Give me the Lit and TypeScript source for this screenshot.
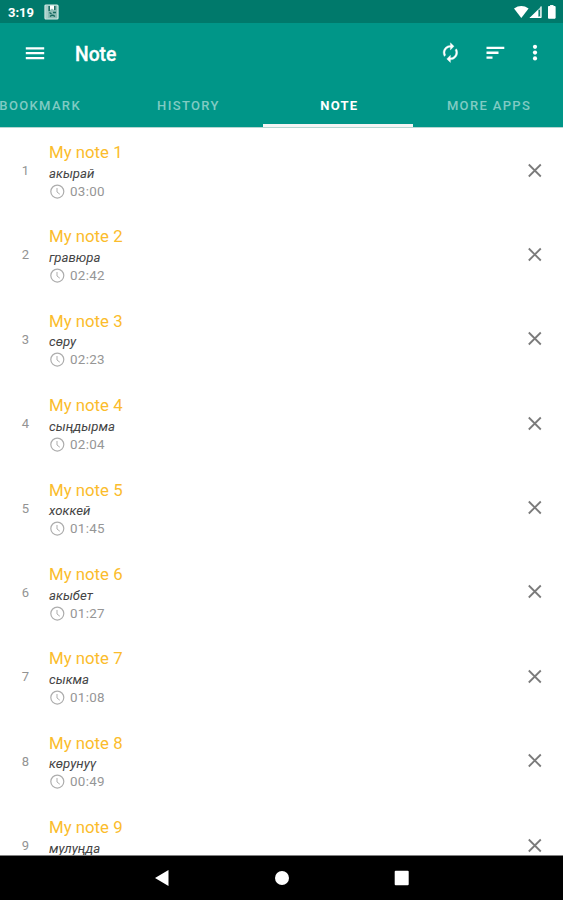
import { LitElement, html, css } from "lit";
import { customElement, property } from "lit/decorators.js";

interface Note {
  word: string;
  time: string;
}

const NOTES: Note[] = [
  { word: "акырай", time: "03:00" },
  { word: "гравюра", time: "02:42" },
  { word: "сөру", time: "02:23" },
  { word: "сыңдырма", time: "02:04" },
  { word: "хоккей", time: "01:45" },
  { word: "акыбет", time: "01:27" },
  { word: "сыкма", time: "01:08" },
  { word: "көрунуү", time: "00:49" },
  { word: "мулуңда", time: "" },
];

const TABS = ["BOOKMARK", "HISTORY", "NOTE", "MORE APPS"];

@customElement("note-row")
export class NoteRow extends LitElement {
  @property({ type: Number }) index = 1;
  @property() word = "";
  @property() time = "";

  static styles = css`
    :host {
      display: grid;
      grid-template-columns: 49px 1fr 57px;
      height: 84.4px;
      box-sizing: border-box;
      padding-top: 14px;
      flex: none;
    }
    .num {
      font-size: 13px;
      line-height: 16px;
      color: #939393;
      width: 51px;
      text-align: center;
      padding-top: 21px;
    }
    .title {
      font-size: 16.8px;
      line-height: 20px;
      color: #fbbc2c;
    }
    .word {
      font-size: 13.2px;
      line-height: 16px;
      font-style: italic;
      color: #444;
      margin-top: 3.6px;
    }
    .time {
      display: flex;
      align-items: center;
      gap: 5px;
      font-size: 13.4px;
      line-height: 16px;
      letter-spacing: 0.3px;
      color: #969696;
      margin-top: 2px;
    }
    .close {
      padding: 19.5px 0 0 20px;
    }
    svg {
      display: block;
    }
  `;

  render() {
    return html`
      <div class="num">${this.index}</div>
      <div>
        <div class="title">My note ${this.index}</div>
        <div class="word">${this.word}</div>
        ${this.time
          ? html`<div class="time">
              <svg width="16" height="16" viewBox="0 0 16 16" fill="none" stroke="#adadad">
                <circle cx="8.300" cy="7.600" r="6.500" stroke-width="1.200" />
                <path d="M8 4v4l2.800 2.200" />
              </svg>
              <span>${this.time}</span>
            </div>`
          : null}
      </div>
      <div class="close">
        <svg width="17" height="17" viewBox="0 0 17 17" fill="none" stroke="#7b7b7b" stroke-width="1.800">
          <path d="M2.800 2.500l12 12M14.800 2.500l-12 12" />
        </svg>
      </div>
    `;
  }
}

@customElement("app-root")
export class AppRoot extends LitElement {
  static styles = css`
    :host {
      display: flex;
      flex-direction: column;
      width: 563px;
      height: 900px;
      overflow: hidden;
      background: #fff;
      font-family: Roboto, "Noto Sans", sans-serif;
    }
    svg {
      display: block;
      flex: none;
    }
    .status {
      display: flex;
      align-items: center;
      height: 23px;
      box-sizing: border-box;
      padding: 1px 5px 0 8px;
      background: #00796b;
      color: #fff;
      font-size: 13px;
      font-weight: 700;
      flex: none;
    }
    .clock {
      width: 36px;
    }
    .spacer {
      flex: 1;
    }
    .header {
      background: #009688;
      height: 104px;
      flex: none;
      color: #fff;
      border-bottom: 1px solid #b5d6d2;
      overflow: hidden;
    }
    .toolbar {
      display: flex;
      align-items: center;
      height: 60px;
      padding: 0 16px 0 23px;
    }
    .heading {
      font-size: 19.3px;
      font-weight: 500;
      -webkit-text-stroke: 0.3px #fff;
      padding-left: 28px;
      padding-top: 2px;
      flex: 1;
    }
    .tabs {
      display: grid;
      grid-template-columns: repeat(4, 150.3px);
      margin-left: -37.5px;
      height: 44px;
    }
    .tab {
      display: flex;
      align-items: center;
      justify-content: center;
      box-sizing: border-box;
      border-bottom: 3px solid transparent;
      padding: 4px 0 0 1px;
      font-size: 13px;
      font-weight: 500;
      letter-spacing: 1.35px;
      color: #80cbc3;
    }
    .tab:first-child {
      padding-left: 5px;
    }
    .tab.active {
      color: #fff;
      font-weight: 700;
      letter-spacing: 1.2px;
      padding-left: 2px;
      border-bottom-color: #f5f5f5;
    }
    .list {
      flex: 1;
      min-height: 0;
      overflow: hidden;
      display: flex;
      flex-direction: column;
    }
    .nav {
      flex: none;
      height: 45px;
      box-sizing: border-box;
      border-top: 1px solid #808080;
      background: #000;
      display: flex;
      align-items: center;
      justify-content: center;
      gap: 104px;
    }
  `;

  render() {
    return html`
      <div class="status">
        <span class="clock">3:19</span>
        <svg width="15" height="16" viewBox="0 0 15 16">
          <rect x="1" y="1" width="13" height="14" rx="1" fill="#8dbdb6" stroke="#d7ebe8" stroke-width="1.200" />
          <path d="M6 1.500h4v4.500l-2-1.500-2 1.500z" fill="#fff" />
          <path d="M5.200 2v5M10.800 2v4M5.500 8.500l2 1.500M9 8.500h3M6 12.500q2-2.500 5 0" stroke="#17695f" stroke-width="1.400" fill="none" />
          <path d="M3 2v12" stroke="#c4dfdb" />
        </svg>
        <span class="spacer"></span>
        <svg width="44" height="15" viewBox="0 0 44 15" fill="#fff">
          <path d="M0 3.500Q7.300-1.300 14.600 3.500L7.300 13z" />
          <path d="M27.500 1v12H15.500z" fill="#9ccdc7" />
          <path d="M24 5v8h-8.500z" />
          <path d="M25.300 5v6" stroke="#00796b" stroke-width="1.200" />
          <path d="M27 1.500v11H16" fill="none" stroke="#fff" />
          <path d="M34.500 1.500h2V.3h2.600v1.200h2v11.700h-6.600z" stroke="#fff" stroke-linejoin="round" />
        </svg>
      </div>
      <div class="header">
        <div class="toolbar">
          <svg width="24" height="24" viewBox="0 0 24 24" fill="#fff">
            <path d="M2.800 6.200h18.400v2.200H2.800zM2.800 11.100h18.400v2.200H2.800zM2.800 16h18.400v2.200H2.800z" />
          </svg>
          <div class="heading">Note</div>
          <svg width="24" height="24" viewBox="0 0 24 24" fill="#fff" stroke="#fff" stroke-width=".4">
            <path
              transform="translate(.6 .8) scale(.9)"
              d="M12 6v3l4-4-4-4v3c-4.420 0-8 3.580-8 8 0 1.570.46 3.030 1.240 4.260L6.700 14.800c-.45-.83-.7-1.790-.7-2.800 0-3.310 2.690-6 6-6zm6.760 1.740L17.300 9.200c.44.84.7 1.790.7 2.800 0 3.310-2.690 6-6 6v-3l-4 4 4 4v-3c4.420 0 8-3.580 8-8 0-1.570-.46-3.030-1.240-4.260z"
            />
          </svg>
          <svg width="60" height="24" viewBox="0 0 60 24" fill="#fff">
            <path d="M23.500 5.700h17.800v2.300H23.500zM23.500 10.600h12v2.300h-12zM23.500 15.600h6v2.200h-6z" />
          </svg>
          <svg width="24" height="24" viewBox="0 0 24 24" fill="#fff">
            <circle cx="12" cy="5.800" r="2.100" />
            <circle cx="12" cy="11.600" r="2.100" />
            <circle cx="12" cy="17.400" r="2.100" />
          </svg>
        </div>
        <div class="tabs">
          ${TABS.map((t) => html`<div class="tab ${t === "NOTE" ? "active" : ""}">${t}</div>`)}
        </div>
      </div>
      <div class="list">
        ${NOTES.map(
          (n, i) => html`<note-row .index=${i + 1} .word=${n.word} .time=${n.time}></note-row>`
        )}
      </div>
      <div class="nav">
        <svg width="16" height="18" viewBox="0 0 16 18" fill="#fff"><path d="M14.500 1v16L1 9z" /></svg>
        <svg width="16" height="16" viewBox="0 0 16 16" fill="#fff"><circle cx="8" cy="8" r="7" /></svg>
        <svg width="16" height="16" viewBox="0 0 16 16" fill="#fff"><rect x=".7" y=".7" width="14" height="14.600" rx="1" /></svg>
      </div>
    `;
  }
}
